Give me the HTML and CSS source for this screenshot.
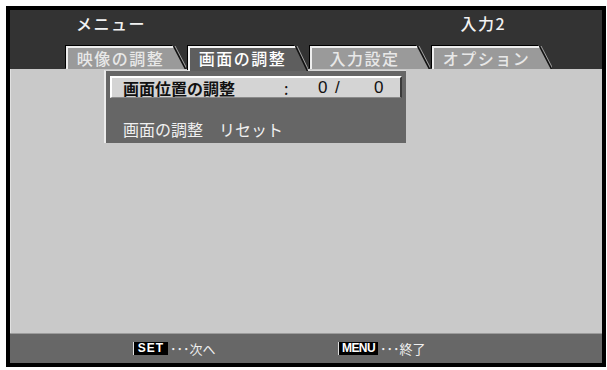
FILE: index.html
```html
<!DOCTYPE html>
<html lang="ja">
<head>
  <meta charset="UTF-8" />
  <title>メニュー</title>
  <link rel="stylesheet" href="styles.css">
</head>
<body>
  <div class="screen">
    <!-- Header: title + tabs -->
    <div class="header">
      <div class="title-row">
        <span class="title">メニュー</span>
        <span class="source">入力2</span>
      </div>
      <div class="tabs">
        <div class="tab">
          <span class="tab-label">映像の調整</span>
          <svg class="tab-slant" width="13" height="23" viewBox="0 0 13 23">
            <polygon points="0,0 1,0 13,23 0,23" fill="#9a9a9a"/>
            <polyline points="0,1 1,1" stroke="#eee" stroke-width="2"/>
            <line x1="0.5" y1="0" x2="12.5" y2="23" stroke="#111" stroke-width="1.6"/>
            <line x1="2" y1="0" x2="14" y2="23" stroke="#bbb" stroke-width="0.8"/>
          </svg>
        </div>
        <div class="tab tab-active">
          <span class="tab-label">画面の調整</span>
          <svg class="tab-slant" width="13" height="25" viewBox="0 0 13 25">
            <polygon points="0,0 1,0 13,25 0,25" fill="#5e5e5e"/>
            <polyline points="0,1 1,1" stroke="#f4f4f4" stroke-width="2"/>
            <line x1="0.5" y1="0" x2="12.5" y2="25" stroke="#111" stroke-width="1.6"/>
            <line x1="2" y1="0" x2="14" y2="25" stroke="#bbb" stroke-width="0.8"/>
          </svg>
        </div>
        <div class="tab">
          <span class="tab-label">入力設定</span>
          <svg class="tab-slant" width="13" height="23" viewBox="0 0 13 23">
            <polygon points="0,0 1,0 13,23 0,23" fill="#9a9a9a"/>
            <polyline points="0,1 1,1" stroke="#eee" stroke-width="2"/>
            <line x1="0.5" y1="0" x2="12.5" y2="23" stroke="#111" stroke-width="1.6"/>
            <line x1="2" y1="0" x2="14" y2="23" stroke="#bbb" stroke-width="0.8"/>
          </svg>
        </div>
        <div class="tab">
          <span class="tab-label">オプション</span>
          <svg class="tab-slant" width="13" height="23" viewBox="0 0 13 23">
            <polygon points="0,0 1,0 13,23 0,23" fill="#9a9a9a"/>
            <polyline points="0,1 1,1" stroke="#eee" stroke-width="2"/>
            <line x1="0.5" y1="0" x2="12.5" y2="23" stroke="#111" stroke-width="1.6"/>
            <line x1="2" y1="0" x2="14" y2="23" stroke="#bbb" stroke-width="0.8"/>
          </svg>
        </div>
      </div>
    </div>

    <!-- Main area with the open submenu -->
    <div class="main">
      <div class="submenu">
        <div class="menu-row menu-row-selected">
          <span class="row-label">画面位置の調整</span>
          <span class="row-colon">:</span>
          <span class="row-h">0</span>
          <span class="row-slash">/</span>
          <span class="row-v">0</span>
        </div>
        <div class="menu-row">
          <span class="row-label">画面の調整　リセット</span>
        </div>
      </div>
    </div>

    <!-- Footer key guide -->
    <div class="footer">
      <div class="key-group">
        <span class="key key-set">SET</span>
        <span class="key-text">･･･次へ</span>
      </div>
      <div class="key-group">
        <span class="key key-menu">MENU</span>
        <span class="key-text">･･･終了</span>
      </div>
    </div>
  </div>
</body>
</html>
```

FILE: styles.css
```css
/*
  --------------------------------------------
  BASIC RESETS AND LAYOUT
  --------------------------------------------
*/
* {
  margin: 0;
  padding: 0;
  box-sizing: border-box;
}

body {
  font-family: "Noto Sans CJK JP", "Noto Sans", sans-serif;
  background-color: #fff;
  width: 607px;
  height: 370px;
  overflow: hidden;
}

.screen {
  margin: 6px 0 0 6px;
  width: 600px;
  height: 361px;
  border: 4px solid #000;
  display: flex;
  flex-direction: column;
  background-color: #c9c9c9;
}

/*
  --------------------------------------------
  HEADER AND TABS
  --------------------------------------------
*/
.header {
  background-color: #333;
  height: 59px;
  display: flex;
  flex-direction: column;
}

.title-row {
  height: 36px;
  padding: 2px 96px 0 66px;
  display: flex;
  justify-content: space-between;
  color: #f2f2f2;
  font-size: 16px;
  line-height: 22px;
  font-weight: 500;
  letter-spacing: 1.5px;
}

.tabs {
  display: flex;
  gap: 2px;
  padding-left: 56px;
  height: 23px;
}

.tab {
  display: flex;
  align-items: flex-start;
  height: 23px;
}

.tab-label {
  width: 107px;
  height: 23px;
  background-color: #9a9a9a;
  border-top: 2px solid #eee;
  border-left: 2px solid #eee;
  box-shadow: -1px -1px 0 #000;
  color: #e8e8e8;
  font-size: 16px;
  line-height: 20px;
  letter-spacing: 1.5px;
  text-align: center;
  font-weight: 500;
}

.tab-active {
  height: 25px;
  position: relative;
  z-index: 1;
}

.tab-active .tab-label {
  height: 25px;
  background-color: #5e5e5e;
  border-color: #f4f4f4;
  color: #fff;
}

.tab-slant {
  display: block;
  flex-shrink: 0;
}

/*
  --------------------------------------------
  MAIN AREA / SUBMENU
  --------------------------------------------
*/
.main {
  flex: 1;
  border-left: 1px solid #e0e0e0;
}

.submenu {
  margin: 1px 0 0 93px;
  width: 302px;
  height: 73px;
  background-color: #666;
  border-top: 1px solid #d8d8d8;
  border-left: 2px solid #ececec;
  padding: 5px 0 0 4px;
}

.menu-row {
  display: flex;
  align-items: center;
  height: 22px;
  font-size: 16px;
  line-height: 22px;
  color: #f0f0f0;
  padding-left: 13px;
  margin-top: 20px;
}

.menu-row-selected {
  margin-top: 0;
  width: 292px;
  background-color: #d4d4d4;
  border-top: 2px solid #fff;
  border-left: 2px solid #fff;
  border-right: 2px solid #3a3a3a;
  border-bottom: 1px solid #8a8a8a;
  color: #111;
  font-weight: bold;
  padding-left: 11px;
}

.menu-row-selected .row-label {
  width: 161px;
}

.row-colon {
  width: 34px;
  font-weight: normal;
}

.row-h,
.row-v {
  font-family: "Liberation Sans", Arial, sans-serif;
  font-weight: normal;
  font-size: 17px;
}

.row-h {
  width: 17px;
}

.row-slash {
  width: 39px;
  font-family: "Liberation Sans", Arial, sans-serif;
  font-weight: normal;
  font-size: 17px;
}

/*
  --------------------------------------------
  FOOTER KEY GUIDE
  --------------------------------------------
*/
.footer {
  height: 30px;
  background-color: #676767;
  border-top: 1px solid #9c9c9c;
  display: flex;
  align-items: center;
  padding-left: 123px;
}

.key-group {
  width: 205px;
  display: flex;
  align-items: center;
}

.key {
  background-color: #000;
  color: #fff;
  font-family: "Liberation Sans", Arial, sans-serif;
  font-weight: bold;
  font-size: 12px;
  line-height: 13px;
  height: 13px;
  border-left: 1px solid #ddd;
  text-align: center;
}

.key-set {
  width: 35px;
  letter-spacing: 1px;
}

.key-menu {
  width: 40px;
  letter-spacing: -0.6px;
}

.key-text {
  color: #f0f0f0;
  font-size: 13px;
  line-height: 15px;
  margin-left: 2px;
}
```
